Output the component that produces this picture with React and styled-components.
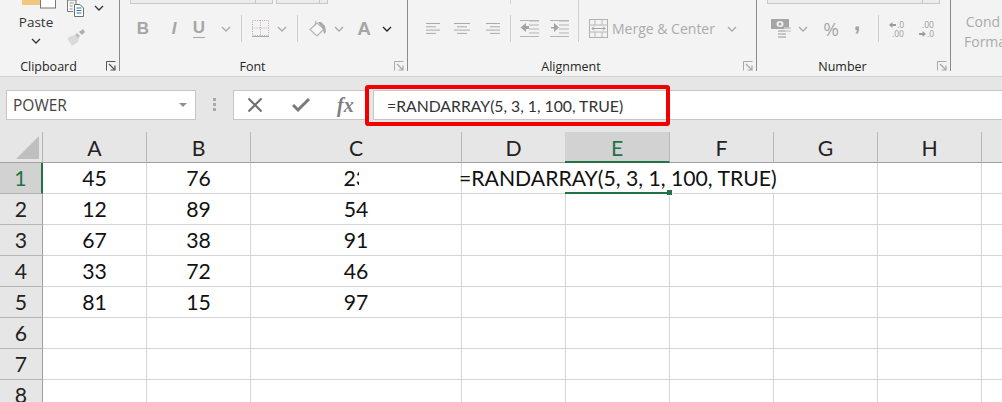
import React from "react";
import styled, { createGlobalStyle } from "styled-components";

const GlobalStyle = createGlobalStyle`
	html, body {
		margin: 0;
		padding: 0;
		width: 100%;
		height: 100%;
		overflow: hidden;
		background: #fff;
	}
`;

const Page = styled.div`
	width: 1002px;
	height: 402px;
	overflow: hidden;
	display: flex;
	flex-direction: column;
	font-family: "Open Sans", "Noto Sans", sans-serif;
`;

const Ribbon = styled.div`
	display: flex;
	flex: none;
	height: 76px;
	padding-bottom: 5px;
	box-sizing: border-box;
	background: #f3f3f3;
`;
const RibbonRule = styled.div`
	flex: none;
	height: 1px;
	background: #d4d4d4;
`;
const Group = styled.div`
	flex: none;
	width: ${(p) => p.$w}px;
	box-sizing: border-box;
	display: flex;
	flex-direction: column;
	border-right: 1px solid #8b8b8b;
`;
const ComboRow = styled.div`
	display: flex;
	height: 4px;
	padding-left: ${(p) => p.$pad || 0}px;
`;
const Combo = styled.div`
	width: ${(p) => p.$w}px;
	margin-right: 3px;
	box-sizing: border-box;
	background: #ececec;
	border: 1px solid #c8c8c8;
	border-top: none;
	display: flex;
	justify-content: flex-end;
	&::after {
		content: "";
		width: ${(p) => p.$btn}px;
		border-left: 1px solid #c8c8c8;
	}
`;
const Stub = styled.div`
	width: 1px;
	background: #cfcfcf;
`;
const Tools = styled.div`
	display: flex;
	align-items: center;
	height: 27px;
	margin-top: 11px;
	padding-left: ${(p) => p.$pad || 0}px;
`;
const Tool = styled.div`
	flex: none;
	width: ${(p) => p.$w}px;
	margin-left: ${(p) => p.$ml || 0}px;
	display: flex;
	justify-content: center;
	align-items: center;
	svg {
		display: block;
		overflow: visible;
	}
`;
const Sep = styled.div`
	flex: none;
	width: 1px;
	height: 27px;
	margin-left: ${(p) => p.$ml}px;
	background: #cfcfcf;
`;
const TallSep = styled(Sep)`
	height: 43px;
	margin-top: -16px;
	align-self: flex-start;
`;
const FontGlyph = styled.span`
	font-family: "Liberation Sans", sans-serif;
	font-weight: bold;
	font-size: ${(p) => p.$size || 17}px;
	font-style: ${(p) => (p.$italic ? "italic" : "normal")};
	line-height: 18px;
	color: #a6a6a6;
	border-bottom: ${(p) => (p.$underline ? "1px solid #a6a6a6" : "none")};
`;
const CommaGlyph = styled(FontGlyph)`
	font-size: 24px;
	color: #a0a0a0;
	transform: translateY(-7px);
`;
const MergeLabel = styled.span`
	flex: none;
	margin-left: 4px;
	font-size: 14px;
	line-height: 20px;
	color: #ababab;
	white-space: nowrap;
`;
const Percent = styled.span`
	font-size: 19px;
	line-height: 20px;
	color: #a6a6a6;
`;
const Footer = styled.div`
	margin-top: auto;
	margin-bottom: -2px;
	display: grid;
	grid-template-columns: 1fr auto 1fr;
	align-items: center;
	height: 14px;
	padding-right: 22px;
`;
const GroupLabel = styled.span`
	grid-column: 2;
	font-size: 12.5px;
	line-height: 14px;
	color: #262626;
	transform: translateY(1px);
`;
const Launcher = styled.div`
	grid-column: 3;
	justify-self: end;
	margin-right: -19px;
	svg {
		display: block;
	}
`;

const ClipTools = styled.div`
	display: flex;
	height: 57px;
`;
const PasteColumn = styled.div`
	flex: none;
	width: 48px;
	margin-left: 12px;
	display: flex;
	flex-direction: column;
	align-items: center;
	svg {
		display: block;
	}
`;
const PasteIcon = styled.svg`
	margin-left: 6px;
`;
const PasteLabel = styled.span`
	margin-top: 4px;
	font-size: 13.5px;
	line-height: 19px;
	color: #333;
`;
const PasteChevron = styled.div`
	margin-top: 6px;
`;
const SmallColumn = styled.div`
	flex: none;
	margin-left: 7px;
	display: flex;
	flex-direction: column;
`;
const SmallRow = styled.div`
	display: flex;
	align-items: flex-start;
	margin-top: ${(p) => p.$mt || 0}px;
	svg {
		display: block;
	}
`;
const CopyChevron = styled.div`
	margin: 5px 0 0 9px;
`;
const CutOff = styled.div`
	flex: 1;
	padding: 12px 0 0 13px;
	font-size: 14px;
	line-height: 20px;
	color: #ababab;
	text-align: center;
	white-space: nowrap;
	overflow: hidden;
`;

const FormulaRow = styled.div`
	position: relative;
	flex: none;
	display: flex;
	align-items: flex-start;
	height: 55px;
	box-sizing: border-box;
	padding: 13px 0 0 6px;
	background: #e6e6e6;
`;
const BarBox = styled.div`
	height: 30px;
	box-sizing: border-box;
	background: #fff;
	border: 1px solid #c6c6c6;
	display: flex;
	align-items: center;
`;
const NameBox = styled(BarBox)`
	flex: none;
	width: 190px;
	padding: 0 8px 0 6px;
	justify-content: space-between;
	font-size: 15.5px;
	color: #444;
`;
const NameArrow = styled.div`
	width: 0;
	height: 0;
	border-left: 4px solid transparent;
	border-right: 4px solid transparent;
	border-top: 4px solid #8f8f8f;
`;
const Dots = styled.div`
	flex: none;
	margin: 8px 17px 0 17px;
	width: 3px;
	display: flex;
	flex-direction: column;
	gap: 2px;
	span {
		height: 3px;
		background: #a9a9a9;
	}
`;
const ButtonBox = styled(BarBox)`
	flex: none;
	width: 135px;
	padding-left: 13px;
	svg {
		display: block;
		flex: none;
	}
`;
const CheckIcon = styled.svg`
	margin-left: 29px;
`;
const Fx = styled.span`
	margin-left: 27px;
	font-family: "Liberation Serif", serif;
	font-style: italic;
	font-weight: bold;
	font-size: 20px;
	color: #7f7f7f;
`;
const FormulaInput = styled(BarBox)`
	flex: 1;
	margin-left: 5px;
	padding-left: 13px;
	border-right: none;
	font-family: "Lato", sans-serif;
	font-size: 15.75px;
	color: #333;
	white-space: nowrap;
`;
const RedCallout = styled.div`
	position: absolute;
	left: 365px;
	top: 8px;
	width: 305px;
	height: 41px;
	box-sizing: border-box;
	border: 4px solid #f20000;
	border-radius: 3px;
`;

const Sheet = styled.div`
	flex: 1;
	display: grid;
	grid-template-columns: 43px 104px 104px 211px repeat(6, 104px);
	grid-auto-rows: 31px;
	font-family: "Lato", sans-serif;
	font-size: 21.2px;
	color: #111;
	overflow: hidden;
`;
const Corner = styled.div`
	background: #e6e6e6;
	border-right: 1px solid #b4b4b4;
	border-bottom: 1px solid #a0a0a0;
	position: relative;
	&::after {
		content: "";
		position: absolute;
		right: 3px;
		bottom: 3px;
		width: 0;
		height: 0;
		border-left: 23px solid transparent;
		border-bottom: 23px solid #bfbfbf;
	}
`;
const ColHead = styled.div`
	box-sizing: border-box;
	display: flex;
	align-items: center;
	justify-content: center;
	margin-left: ${(p) => (p.$active ? "-1px" : "0")};
	background: ${(p) => (p.$active ? "#d2d2d2" : "#e6e6e6")};
	color: ${(p) => (p.$active ? "#217346" : "#222")};
	border-right: 1px solid #b8b8b8;
	border-bottom: ${(p) => (p.$active ? "2px solid #217346" : "1px solid #a0a0a0")};
	padding-top: 2px;
`;
const RowHead = styled.div`
	box-sizing: border-box;
	display: flex;
	align-items: center;
	justify-content: center;
	background: ${(p) => (p.$active ? "#d2d2d2" : "#e6e6e6")};
	color: ${(p) => (p.$active ? "#217346" : "#222")};
	border-right: ${(p) => (p.$active ? "2px solid #217346" : "1px solid #a0a0a0")};
	border-bottom: 1px solid #b4b4b4;
`;
const Cell = styled.div`
	position: relative;
	box-sizing: border-box;
	display: flex;
	align-items: center;
	justify-content: ${(p) => (p.$start ? "flex-start" : "center")};
	margin-left: ${(p) => (p.$active ? "-1px" : "0")};
	background: #fff;
	border-right: ${(p) => (p.$open ? "none" : "1px solid #d4d4d4")};
	border-bottom: ${(p) => (p.$active ? "2px solid #217346" : "1px solid #d4d4d4")};
`;
const OverflowText = styled.span`
	margin-left: -3px;
	white-space: nowrap;
	position: relative;
	z-index: 2;
`;
const ClippedValue = styled.span`
	width: 15px;
	margin-right: 10px;
	overflow: hidden;
	white-space: nowrap;
`;
const FillHandle = styled.div`
	position: absolute;
	right: -3px;
	bottom: -4px;
	width: 5px;
	height: 5px;
	background: #217346;
	border: 1px solid #fff;
	border-left: none;
	border-top: none;
	z-index: 3;
`;

const Chevron = ({ color = "#a9a9a9" }) => (
	<svg width="10" height="6" viewBox="0 0 10 6">
		<path d="M1 1l4 4 4-4" fill="none" stroke={color} strokeWidth="1.3" />
	</svg>
);

const DialogLauncher = ({ color = "#a8a8a8" }) => (
	<svg width="10" height="10" viewBox="0 0 10 10">
		<path d="M0.5 9.5V0.5H9.5" fill="none" stroke={color} />
		<path d="M3 3l5.5 5.5M9 4.5V9H4.5" fill="none" stroke={color} strokeWidth="1.2" />
	</svg>
);

const Lines = ({ width, rows }) => (
	<svg width={width} height="11" viewBox={`0 0 ${width} 11`}>
		{rows.map(([x1, x2], i) => (
			<line key={i} x1={x1} x2={x2} y1={i * 3.3 + 0.5} y2={i * 3.3 + 0.5} stroke="#ababab" />
		))}
	</svg>
);

const IndentIcon = ({ flip }) => (
	<svg width="19" height="17" viewBox="0 0 19 17">
		<path d="M9 1h10M9 5h10M9 9h10M9 13h10M0 16.5h19M0 0.5h19" stroke="#b5b5b5" fill="none" />
		{flip ? (
			<path d="M1 7h3V3l5 4.5L4 12V8.5H1z" fill="#a5a5a5" />
		) : (
			<path d="M9 6H6V3L0.5 7.5 6 12V9h3z" fill="#a5a5a5" />
		)}
	</svg>
);

const CopyIcon = () => (
	<svg width="18" height="17" viewBox="0 0 18 17">
		<path d="M0.5 0V11.5H6" fill="#fff" stroke="#7b7b7b" />
		<path d="M0.5 0H9V4" fill="none" stroke="#7b7b7b" />
		<path d="M2.5 3h4M2.5 6h3M2.5 9h3" stroke="#9a9a9a" />
		<path d="M7.5 4.5H13L16.5 8V16.5H7.5z" fill="#fff" stroke="#6f6f6f" />
		<path d="M9.5 8h5M9.5 10.5h5M9.5 13h5" stroke="#2f75b5" />
	</svg>
);

const PainterIcon = () => (
	<svg width="19" height="17" viewBox="0 0 19 17">
		<path d="M0 9l5 8 6-4 1-4-5-3z" fill="#dadada" />
		<path d="M8 6l3 3 2-2-3-3z" fill="#bdbdbd" />
		<path d="M12 3l3 3 3-3-2-3z" fill="#b0b0b0" />
	</svg>
);

const MoneyIcon = () => (
	<svg width="20" height="20" viewBox="0 0 20 20">
		<rect x="0" y="0" width="18" height="10" fill="#a6a6a6" />
		<ellipse cx="9" cy="5" rx="3.5" ry="3" fill="#f3f3f3" />
		<circle cx="9" cy="5" r="1.5" fill="#a6a6a6" />
		<path d="M7 12h8M7 15h8M7 18h8" stroke="#c4c4c4" strokeWidth="2" />
		<path d="M13 9h7M14 12h6" stroke="#d0d0d0" strokeWidth="1.5" />
	</svg>
);

const DecimalIcon = ({ up }) => (
	<svg width="16" height="18" viewBox="0 0 16 18" fontFamily="Open Sans" fontSize="8.5" fill="#9c9c9c">
		{up ? (
			<>
				<path d="M0 5l3.5-3v2H7v2H3.500v2z" />
				<text x="8" y="8">.0</text>
				<text x="3" y="17">.00</text>
			</>
		) : (
			<>
				<text x="3" y="8">.00</text>
				<path d="M7 14l-3.500-3v2H0v2h3.500v2z" />
				<text x="8" y="17">.0</text>
			</>
		)}
	</svg>
);

const columns = ["A", "B", "C", "D", "E", "F", "G", "H", "I"];
const values = [
	[12, 89, 54],
	[67, 38, 91],
	[33, 72, 46],
	[81, 15, 97],
	["", "", ""],
	["", "", ""],
	["", "", ""],
];

const App = () => {
	return (
		<Page>
			<GlobalStyle />
			<Ribbon>
				<Group $w={120}>
					<ClipTools>
						<PasteColumn>
							<PasteIcon width="35" height="9" viewBox="0 0 35 9">
								<rect x="0" y="0" width="18" height="5" fill="#f0c97e" />
								<rect x="18.5" y="-1" width="15" height="9" fill="#fff" stroke="#777" />
							</PasteIcon>
							<PasteLabel>Paste</PasteLabel>
							<PasteChevron>
								<Chevron color="#333" />
							</PasteChevron>
						</PasteColumn>
						<SmallColumn>
							<SmallRow>
								<CopyIcon />
								<CopyChevron>
									<Chevron color="#333" />
								</CopyChevron>
							</SmallRow>
							<SmallRow $mt={12}>
								<PainterIcon />
							</SmallRow>
						</SmallColumn>
					</ClipTools>
					<Footer>
						<GroupLabel>Clipboard</GroupLabel>
						<Launcher>
							<DialogLauncher color="#555" />
						</Launcher>
					</Footer>
				</Group>

				<Group $w={288}>
					<ComboRow $pad={10}>
						<Combo $w={143} $btn={16} />
						<Combo $w={52} $btn={7} />
					</ComboRow>
					<Tools $pad={13}>
						<Tool $w={20}>
							<FontGlyph>B</FontGlyph>
						</Tool>
						<Tool $w={20} $ml={11}>
							<FontGlyph $italic>I</FontGlyph>
						</Tool>
						<Tool $w={20} $ml={5}>
							<FontGlyph $underline>U</FontGlyph>
						</Tool>
						<Tool $w={10} $ml={12}>
							<Chevron />
						</Tool>
						<Sep $ml={10} />
						<Tool $w={18} $ml={9}>
							<svg width="17" height="17" viewBox="0 0 17 17">
								<rect x="0.500" y="0.500" width="16" height="15" fill="#f5f1f5" stroke="#b0b0b0" strokeDasharray="1 1.300" />
								<path d="M8.500 0v16M0 8h17" stroke="#b0b0b0" strokeDasharray="1 1.300" />
								<path d="M0 16.500h17" stroke="#aaa" />
							</svg>
						</Tool>
						<Tool $w={10} $ml={8}>
							<Chevron />
						</Tool>
						<Sep $ml={10} />
						<Tool $w={20} $ml={10}>
							<svg width="19" height="17" viewBox="0 0 19 17">
								<path d="M8 3L1 9.500 8 16l7-7z" fill="#f7f7f7" stroke="#b4b4b4" strokeWidth="1.200" />
								<path d="M7 0.500L5.500 6" stroke="#b4b4b4" fill="none" />
								<path d="M9 2h3l4 4 1 6-2 2-1-5z" fill="#a8a8a8" />
							</svg>
						</Tool>
						<Tool $w={10} $ml={6}>
							<Chevron />
						</Tool>
						<Tool $w={20} $ml={10}>
							<FontGlyph $size={19}>A</FontGlyph>
						</Tool>
						<Tool $w={10} $ml={8}>
							<Chevron color="#222" />
						</Tool>
					</Tools>
					<Footer>
						<GroupLabel>Font</GroupLabel>
						<Launcher>
							<DialogLauncher />
						</Launcher>
					</Footer>
				</Group>

				<Group $w={349}>
					<ComboRow $pad={102}>
						<Stub />
					</ComboRow>
					<Tools $pad={17}>
						<Tool $w={15}>
							<Lines width={14} rows={[[0, 14], [0, 10], [0, 14], [0, 10]]} />
						</Tool>
						<Tool $w={16} $ml={14}>
							<Lines width={16} rows={[[0, 16], [3, 13], [0, 16], [3, 13]]} />
						</Tool>
						<Tool $w={15} $ml={15}>
							<Lines width={14} rows={[[0, 14], [4, 14], [0, 14], [4, 14]]} />
						</Tool>
						<Sep $ml={10} />
						<Tool $w={19} $ml={9}>
							<IndentIcon />
						</Tool>
						<Tool $w={19} $ml={11}>
							<IndentIcon flip />
						</Tool>
						<TallSep $ml={9} />
						<Tool $w={20} $ml={9}>
							<svg width="19" height="19" viewBox="0 0 19 19">
								<rect x="0.500" y="0.500" width="18" height="18" fill="none" stroke="#b0b0b0" />
								<path d="M0 6h19M0 13h19M6 0v6M13 0v6M6 13v6M13 13v6" stroke="#b8b8b8" />
								<path d="M3 9.500h13M5 7.500L3 9.500l2 2M14 7.500l2 2-2 2" fill="none" stroke="#a0a0a0" />
							</svg>
						</Tool>
						<MergeLabel>Merge &amp; Center</MergeLabel>
						<Tool $w={10} $ml={12}>
							<Chevron />
						</Tool>
					</Tools>
					<Footer>
						<GroupLabel>Alignment</GroupLabel>
						<Launcher>
							<DialogLauncher />
						</Launcher>
					</Footer>
				</Group>

				<Group $w={194}>
					<ComboRow $pad={10}>
						<Combo $w={173} $btn={16} />
					</ComboRow>
					<Tools>
						<Tool $w={20} $ml={14}>
							<MoneyIcon />
						</Tool>
						<Tool $w={10} $ml={7}>
							<Chevron />
						</Tool>
						<Tool $w={18} $ml={14}>
							<Percent>%</Percent>
						</Tool>
						<Tool $w={10} $ml={12}>
							<CommaGlyph>,</CommaGlyph>
						</Tool>
						<Sep $ml={16} />
						<Tool $w={16} $ml={10}>
							<DecimalIcon up />
						</Tool>
						<Tool $w={16} $ml={14}>
							<DecimalIcon />
						</Tool>
					</Tools>
					<Footer>
						<GroupLabel>Number</GroupLabel>
						<Launcher>
							<DialogLauncher />
						</Launcher>
					</Footer>
				</Group>

				<CutOff>
					Cond
					<br />
					Forma
				</CutOff>
			</Ribbon>
			<RibbonRule />

			<FormulaRow>
				<NameBox>
					POWER
					<NameArrow />
				</NameBox>
				<Dots>
					<span />
					<span />
					<span />
				</Dots>
				<ButtonBox>
					<svg width="16" height="16" viewBox="0 0 16 16">
						<path d="M1.500 1.500l13 13M14.500 1.500l-13 13" stroke="#6e6e6e" strokeWidth="2" fill="none" />
					</svg>
					<CheckIcon width="18" height="16" viewBox="0 0 18 16">
						<path d="M1 8l5 5L17 2" stroke="#7a7a7a" strokeWidth="3" fill="none" />
					</CheckIcon>
					<Fx>fx</Fx>
				</ButtonBox>
				<FormulaInput>=RANDARRAY(5, 3, 1, 100, TRUE)</FormulaInput>
				<RedCallout />
			</FormulaRow>

			<Sheet>
				<Corner />
				{columns.map((c) => (
					<ColHead key={c} $active={c === "E"}>
						{c}
					</ColHead>
				))}

				<RowHead $active>1</RowHead>
				<Cell>45</Cell>
				<Cell>76</Cell>
				<Cell>
					<ClippedValue>23</ClippedValue>
				</Cell>
				<Cell $start $open>
					<OverflowText>=RANDARRAY(5, 3, 1, 100, TRUE)</OverflowText>
				</Cell>
				<Cell $open $active>
					<FillHandle />
				</Cell>
				<Cell $open />
				<Cell />
				<Cell />
				<Cell />

				{values.map((row, i) => (
					<React.Fragment key={i}>
						<RowHead>{i + 2}</RowHead>
						{columns.map((c, j) => (
							<Cell key={c}>{row[j]}</Cell>
						))}
					</React.Fragment>
				))}
			</Sheet>
		</Page>
	);
};

export default App;
